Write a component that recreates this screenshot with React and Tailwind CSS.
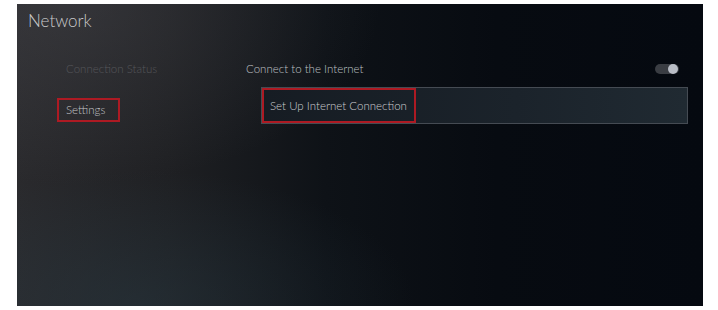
export default function App() {
  return (
    <div className="w-[718px] h-[310px] bg-white pl-[17px] pt-[4px] font-['Lato','Liberation_Sans',sans-serif]">
      <div className="w-[686px] h-[302px] flex flex-col bg-[radial-gradient(ellipse_45%_60%_at_8%_0%,rgba(80,80,86,0.35),transparent),radial-gradient(ellipse_40%_45%_at_18%_100%,rgba(40,58,68,0.45),transparent),linear-gradient(to_right,#2a2a2d_0%,#1f2023_22%,#0e1217_45%,#070b11_70%,#050910_100%)]">
        <div className="pl-[11px] pt-[6px] h-[50px] text-[17px] leading-[22px] font-light text-[#c9c9cb]">Network</div>
        <div className="flex">
          <div className="w-[229px] pl-[40px] flex flex-col">
            <div className="pl-[9px] text-[11.5px] leading-[14px] font-light text-[#55565a] mt-[8px]">Connection Status</div>
            <div className="mt-[22px] w-[63px] h-[24px] border-2 border-[#ad1a23] flex items-center pl-[7px] text-[11.5px] font-light text-[#c4c5c8]">Settings</div>
          </div>
          <div className="flex-1 pr-[15px] flex flex-col">
            <div className="flex items-center justify-between h-[18px] mt-[6px] pr-[9px]">
              <span className="text-[11.5px] leading-[14px] font-light text-[#bfc1c5]">Connect to the Internet</span>
              <div className="w-[24px] h-[10px] rounded-full bg-[#3a3d43] flex items-center justify-end pr-[1px]">
                <div className="w-[10px] h-[10px] rounded-full bg-[#b9bdc6]" />
              </div>
            </div>
            <div className="ml-[15px] mt-[9px] h-[37px] border border-[#454b53] bg-[linear-gradient(to_right,#161c23,#1b232b_60%,#202a32)] flex items-stretch">
              <div className="w-[154px] border-2 border-[#ad1a23] flex items-center pl-[6px] text-[11.5px] font-light text-[#cbcdd0]">Set Up Internet Connection</div>
            </div>
          </div>
        </div>
      </div>
    </div>
  );
}
